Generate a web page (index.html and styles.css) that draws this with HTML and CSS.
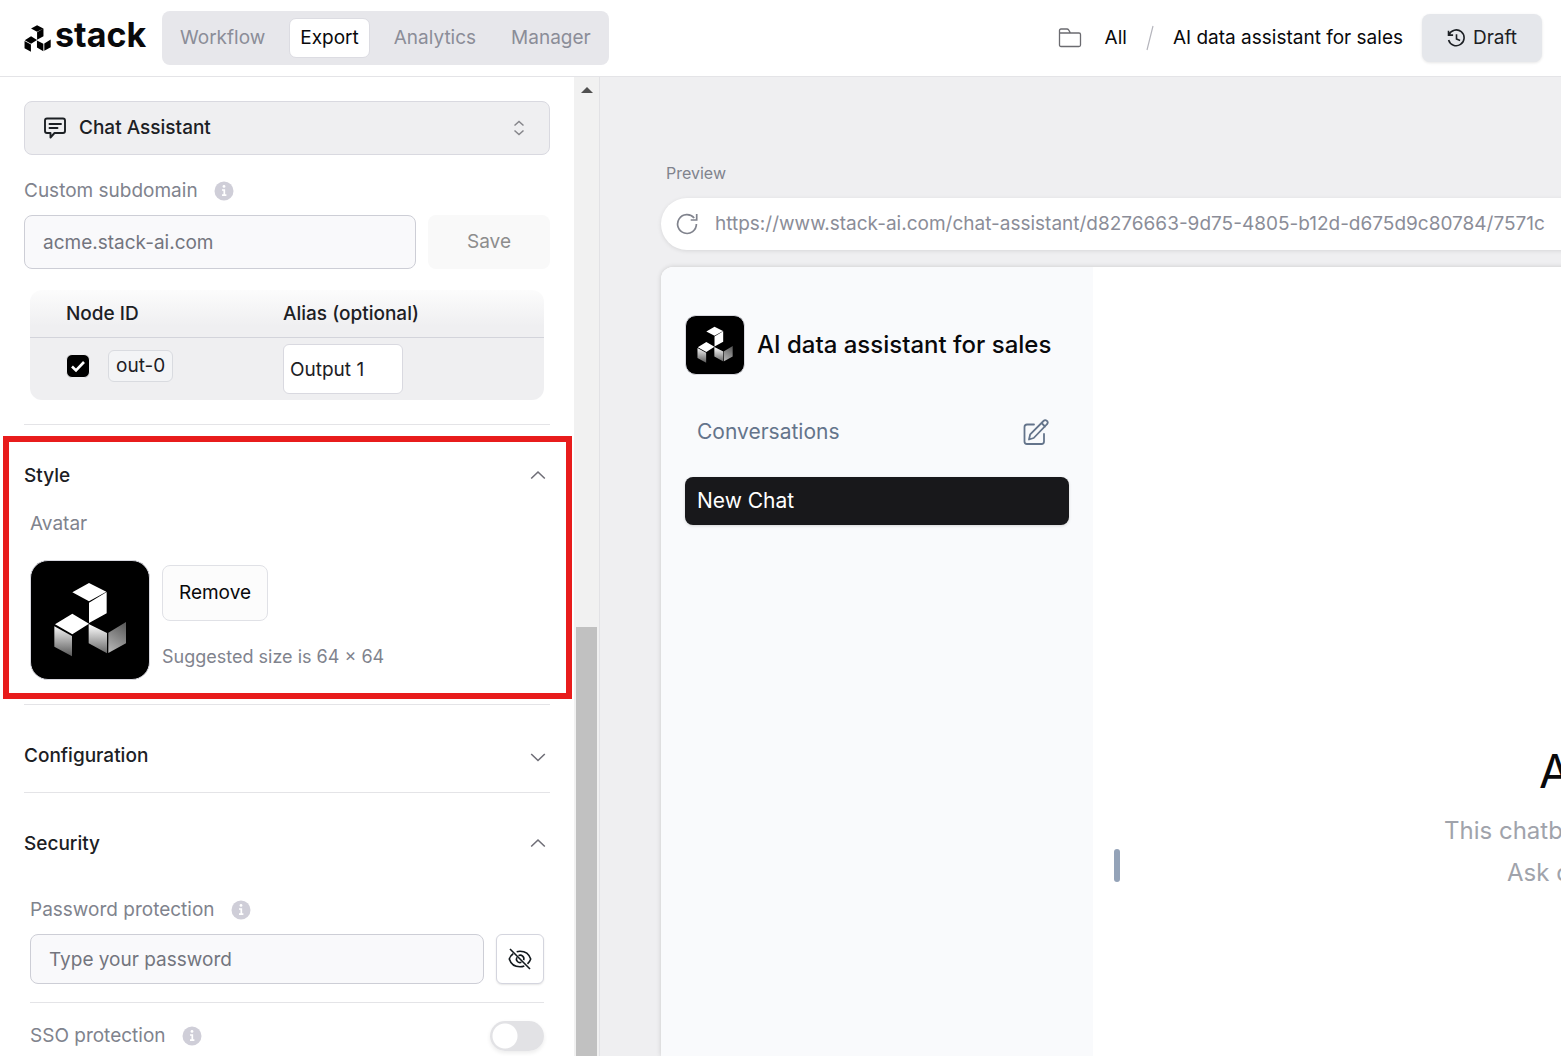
FILE: index.html
```html
<!DOCTYPE html>
<html lang="en">
<head>
<meta charset="utf-8">
<meta name="viewport" content="width=device-width, initial-scale=1">
<title>Stack – Export</title>
<link rel="stylesheet" href="styles.css">
</head>
<body>
<svg class="defs" aria-hidden="true">
  <defs>
    <linearGradient id="fade" gradientUnits="userSpaceOnUse" x1="0" y1="590" x2="0" y2="690">
      <stop offset="0" stop-color="#f4f4f4"/><stop offset="1" stop-color="#444"/>
    </linearGradient>
    <linearGradient id="fade-side" gradientUnits="userSpaceOnUse" x1="378" y1="585" x2="325" y2="660">
      <stop offset="0" stop-color="#5c5c5c"/><stop offset="1" stop-color="#b4b4b4"/>
    </linearGradient>
    <symbol id="cubes" viewBox="93 393 354 354">
      <path fill="#fff" d="M217 487l50-28 52 26-52 29zM267 518l53-32v64l-53 29zM165 583l52-32 50 30-50 32z"/>
      <path fill="url(#fade)" d="M163 589l53 29v61l-53-29zM266 582l55 27v61l-55-30z"/>
      <path fill="url(#fade-side)" d="M325 608l53-32v64l-53 29z"/>
    </symbol>
    <symbol id="info" viewBox="0 0 20 20">
      <circle cx="10" cy="10" r="9.5" fill="#cfced8"/>
      <circle cx="10" cy="5.4" r="1.4" fill="#fff"/>
      <path d="M8 9h2.3v5M8 14.2h4.4" fill="none" stroke="#fff" stroke-width="1.7"/>
    </symbol>
    <symbol id="chevron-up" viewBox="0 0 16 16">
      <path d="M1.2 10.5L8 4l6.8 6.5" fill="none" stroke="#6f6e77" stroke-width="1.6"/>
    </symbol>
    <symbol id="chevron-down" viewBox="0 0 16 16">
      <path d="M1.2 6L8 12.5 14.8 6" fill="none" stroke="#6f6e77" stroke-width="1.6"/>
    </symbol>
  </defs>
</svg>

<header class="topbar">
  <a class="brand" href="#">
    <svg class="brand-mark" viewBox="160 457 221 224" aria-hidden="true">
      <path d="M217 487l50-28 52 26-52 29zM267 518l53-32v64l-53 29zM165 583l52-32 50 30-50 32zM163 589l53 29v61l-53-29zM266 586l53 27v61l-53-30zM327 610l53-32v64l-53 29z"/>
    </svg>
    <span>stack</span>
  </a>
  <nav class="tabs">
    <a href="#">Workflow</a>
    <a href="#" class="active" aria-current="page">Export</a>
    <a href="#">Analytics</a>
    <a href="#">Manager</a>
  </nav>
  <div class="crumbs">
    <svg class="icon-folder" viewBox="0 0 24 24" aria-hidden="true"><path d="M1.500 19V4.500q0-1.500 1.500-1.500h6q1 0 1.600.9L12.500 7H21q1.500 0 1.500 1.500V19q0 1.500-1.500 1.500H3q-1.500 0-1.500-1.500zM1.500 7h11" fill="none" stroke="#6b6b70" stroke-width="1.300"/></svg>
    <a href="#">All</a>
    <svg class="slash" viewBox="0 0 8 26" aria-hidden="true"><path d="M7 1L1 25" stroke="#b4b4bc" stroke-width="1.200"/></svg>
    <span>AI data assistant for sales</span>
  </div>
  <button class="draft" type="button">
    <svg viewBox="0 0 20 20" aria-hidden="true"><path d="M2 6.200A8.300 8.300 0 1 1 1.700 11.500M1.600 1.800v4.700h4.800M10 5.500v5l3.800 1.600" fill="none" stroke="#1c2024" stroke-width="1.700"/></svg>
    Draft
  </button>
</header>

<div class="workspace">
  <aside class="settings">
    <div class="settings-body">
      <div class="select-box">
        <svg class="icon-chat" viewBox="0 0 24 24" aria-hidden="true"><path d="M4 2.500h16q2 0 2 2V15q0 2-2 2h-8.500L7.500 21.500V17H4q-2 0-2-2V4.500q0-2 2-2zM6.500 8h11.500M6.500 12h8" fill="none" stroke="#1c2024" stroke-width="1.900" stroke-linejoin="round" stroke-linecap="round"/></svg>
        <select aria-label="Interface"><option>Chat Assistant</option></select>
        <svg class="icon-sort" viewBox="0 0 12 16" aria-hidden="true"><path d="M1.500 5.500L6 1.500l4.500 4M1.500 10.500L6 14.500l4.500-4" fill="none" stroke="#85858a" stroke-width="1.500"/></svg>
      </div>

      <div class="label-row">
        <label for="subdomain">Custom subdomain</label>
        <svg class="info"><use href="#info"/></svg>
      </div>
      <div class="field-row">
        <input id="subdomain" class="field tall" type="text" placeholder="acme.stack-ai.com">
        <button class="save" type="button" disabled>Save</button>
      </div>

      <table class="nodes">
        <thead><tr><th scope="col">Node ID</th><th scope="col">Alias (optional)</th></tr></thead>
        <tbody><tr>
          <td><div class="node-cell"><input type="checkbox" checked aria-label="Include out-0"><span class="chip">out-0</span></div></td>
          <td><input class="alias" type="text" value="Output 1" aria-label="Alias for out-0"></td>
        </tr></tbody>
      </table>

      <section class="group highlighted">
        <h2><button type="button" aria-expanded="true">Style <svg class="chevron"><use href="#chevron-up"/></svg></button></h2>
        <div class="inset">
          <p class="avatar-label">Avatar</p>
          <div class="avatar-row">
            <svg class="avatar" role="img" aria-label="Avatar"><use href="#cubes"/></svg>
            <div class="avatar-side">
              <button class="remove" type="button">Remove</button>
              <p class="hint">Suggested size is 64 × 64</p>
            </div>
          </div>
        </div>
      </section>

      <section class="group">
        <h2><button type="button" aria-expanded="false">Configuration <svg class="chevron"><use href="#chevron-down"/></svg></button></h2>
      </section>

      <section class="group">
        <h2><button type="button" aria-expanded="true">Security <svg class="chevron"><use href="#chevron-up"/></svg></button></h2>
        <div class="inset security">
          <div class="label-row">
            <label for="password">Password protection</label>
            <svg class="info"><use href="#info"/></svg>
          </div>
          <div class="field-row">
            <input id="password" class="field" type="password" placeholder="Type your password">
            <button class="eye" type="button" aria-label="Show password">
              <svg viewBox="0 0 24 24" aria-hidden="true"><g fill="none" stroke="#11181c" stroke-width="1.600"><path d="M5.200 6.800C3.300 8 2 9.700 1.300 12c1.500 4.800 5.500 7.800 10.700 7.800 1.600 0 3-.3 4.300-.8M8.700 4.700c1-.3 2.100-.5 3.300-.5 5.200 0 9.200 3 10.700 7.800-.6 1.900-1.700 3.500-3.200 4.800M10.500 8.600a3.600 3.600 0 0 1 5.100 4.500M8.800 10.400a3.600 3.600 0 0 0 4.600 4.900M2 2l20 20"/></g></svg>
            </button>
          </div>
          <div class="switch-row">
            <div class="label-row">
              <label for="sso">SSO protection</label>
              <svg class="info"><use href="#info"/></svg>
            </div>
            <input id="sso" class="switch" type="checkbox" role="switch">
          </div>
        </div>
      </section>
    </div>
    <div class="scrollbar" aria-hidden="true"><i class="arrow"></i><i class="thumb"></i></div>
  </aside>

  <main class="preview">
    <p class="preview-label">Preview</p>
    <div class="address">
      <svg viewBox="0 0 22 22" aria-hidden="true"><path d="M20.400 11A9.400 9.400 0 1 1 18.200 5M20.700 1v6h-6" fill="none" stroke="#80838d" stroke-width="1.700"/></svg>
      <span>https://www.stack-ai.com/chat-assistant/d8276663-9d75-4805-b12d-d675d9c80784/7571c</span>
    </div>
    <div class="app">
      <aside class="app-side">
        <div class="app-title">
          <svg class="app-avatar" aria-hidden="true"><use href="#cubes"/></svg>
          <h1>AI data assistant for sales</h1>
        </div>
        <div class="convos">
          <span>Conversations</span>
          <button type="button" aria-label="New conversation">
            <svg viewBox="0 0 26 26" aria-hidden="true"><path d="M11 5.500H4q-2.500 0-2.500 2.500v14.500Q1.500 25 4 25h14.500q2.500 0 2.500-2.500V15M6 20.500l1.200-5.200L20.500 2q1.300-1.300 2.600-.600 2.300 1.100 1.400 3-.2.500-.7 1L10.700 19zM18.500 4l3.500 3.500" fill="none" stroke="#64748b" stroke-width="1.800" stroke-linejoin="round" stroke-linecap="round"/></svg>
          </button>
        </div>
        <a class="new-chat" href="#">New Chat</a>
      </aside>
      <div class="handle"></div>
      <section class="hero">
        <h2>AI data assistant for sales</h2>
        <p class="intro">This chatbot</p>
        <p class="ask">Ask questions</p>
      </section>
    </div>
  </main>
</div>
</body>
</html>
```

FILE: styles.css
```css
* { box-sizing: border-box; }
body {
  margin: 0;
  height: 100vh;
  display: flex;
  flex-direction: column;
  overflow: hidden;
  background: #fff;
  color: #1c2024;
  font: 400 19px/24px Inter, "Liberation Sans", sans-serif;
}
h1, h2, p { margin: 0; font-weight: 400; }
a { color: inherit; text-decoration: none; }
button, input, select { font: inherit; color: inherit; margin: 0; }
svg { display: block; flex: none; }
.defs { position: absolute; width: 0; height: 0; }

.topbar {
  flex: none;
  display: flex;
  align-items: center;
  height: 77px;
  padding: 0 19px 0 24px;
  border-bottom: 1px solid #e4e4e7;
  color: #09090b;
}
.brand { display: flex; align-items: center; gap: 4px; width: 138px; font-size: 34px; font-weight: 700; line-height: 40px; }
.brand-mark { width: 27px; height: 27px; }
.brand span { padding-bottom: 6px; }
.tabs { display: flex; gap: 13px; padding: 7px; background: #e7e7eb; border-radius: 8px; }
.tabs a { padding: 7px 10px; border: 1px solid transparent; border-radius: 7px; color: #8b8d98; }
.tabs .active { background: #fff; border-color: #dcdce2; color: #09090b; }
.crumbs { display: flex; align-items: center; gap: 19px; margin-left: auto; }
.icon-folder { width: 24px; height: 24px; margin-right: 4px; }
.slash { width: 8px; height: 26px; }
.draft {
  display: flex;
  align-items: center;
  justify-content: center;
  gap: 7px;
  width: 120px;
  height: 48px;
  margin-left: 19px;
  border: 0;
  border-radius: 8px;
  background: #e5e7eb;
  box-shadow: 0 1px 3px rgba(0, 0, 0, .1);
  color: #1c2024;
}
.draft svg { width: 19px; height: 19px; }

.workspace { flex: 1; min-height: 0; display: flex; }
.settings { flex: none; display: flex; width: 600px; border-right: 1px solid #e2e2e5; overflow: hidden; }
.settings-body { flex: 1; padding: 24px 24px 0; }
.scrollbar { display: flex; flex-direction: column; align-items: center; width: 25px; background: #f1f1f1; }
.arrow { margin-top: 10px; border: 6px solid transparent; border-top: 0; border-bottom-color: #505050; }
.thumb { flex: 1; width: 21px; margin-top: 534px; background: #c1c1c1; }

.select-box { position: relative; }
.select-box select {
  width: 100%;
  height: 54px;
  padding: 0 54px;
  border: 1px solid #d9d9e0;
  border-radius: 8px;
  background: #efeff1;
  appearance: none;
  font-weight: 500;
}
.icon-chat, .icon-sort { position: absolute; pointer-events: none; }
.icon-chat { left: 19px; top: 15px; width: 24px; height: 24px; }
.icon-sort { right: 25px; top: 19px; width: 12px; height: 16px; }

.label-row { display: flex; align-items: center; gap: 16px; color: #80838d; }
.info { width: 20px; height: 20px; }
.settings-body > .label-row { margin: 24px 0 12px; }
.field-row { display: flex; gap: 12px; }
.field {
  flex: 1;
  min-width: 0;
  height: 50px;
  padding: 0 18px;
  border: 1px solid #cdced6;
  border-radius: 8px;
  background: #f9f9fb;
}
.field.tall { height: 54px; }
.field::placeholder { color: #73757e; opacity: 1; }
.save { width: 122px; border: 0; border-radius: 8px; background: #f9f9f9; color: #8d8d8d; }

.nodes {
  width: calc(100% - 12px);
  margin: 21px 6px 24px;
  border-spacing: 0;
  table-layout: fixed;
  border-radius: 12px;
  background: linear-gradient(#fcfcfc, #efeff1 36px);
}
.nodes th, .nodes td { padding: 0 0 0 36px; }
.nodes th { height: 48px; border-bottom: 1px solid #d3d4db; text-align: left; font-weight: 500; }
.nodes td { height: 62px; }
.nodes th:first-child { width: 217px; }
.node-cell { display: flex; align-items: center; gap: 18px; padding-bottom: 6px; }
.node-cell input {
  width: 24px;
  height: 24px;
  appearance: none;
  border: 1px solid #efeff1;
  border-radius: 6px;
  background: #000 url("data:image/svg+xml,%3Csvg xmlns='http://www.w3.org/2000/svg' viewBox='0 0 22 22'%3E%3Cpath d='M5 11.500l4 4L17 7' fill='none' stroke='white' stroke-width='2.600'/%3E%3C/svg%3E") center / 22px;
}
.chip { padding: 3px 7px; border: 1px solid #d9dbe0; border-radius: 6px; background: #f3f4f6; }
.alias { display: block; width: 120px; height: 50px; padding: 0 6px; border: 1px solid #d9d9e0; border-radius: 6px; background: #fff; }

.group { position: relative; padding: 39px 0 24px; border-top: 1px solid #e4e4e7; }
/* Callout frame drawn around the section being explained */
.highlighted::after {
  content: "";
  position: absolute;
  inset: 11px -22px 5px -21px;
  border: 6px solid #e81c1c;
  pointer-events: none;
}
.group h2 { font-size: 19px; line-height: 24px; }
.group h2 button {
  display: flex;
  align-items: center;
  justify-content: space-between;
  width: 100%;
  padding: 0 4px 0 0;
  border: 0;
  background: none;
  font-weight: 500;
}
.chevron { width: 16px; height: 16px; }
.inset { padding: 0 6px; }
.avatar-label { margin: 24px 0; color: #80838d; }
.avatar-row { display: flex; gap: 12px; }
.avatar { width: 120px; height: 120px; border: 1px solid #d9d9e0; border-radius: 18px; background: #000; }
.avatar-side { padding-top: 5px; }
.remove { width: 106px; height: 56px; margin-bottom: 24px; border: 1px solid #e0e1e6; border-radius: 8px; background: #fcfcfc; color: #09090b; }
.hint { font-size: 18px; color: #80838d; }
.security > .label-row { margin: 42px 0 12px; }
.eye { display: grid; place-items: center; width: 48px; padding: 0; border: 1px solid #d4d5de; border-radius: 6px; background: #fff; box-shadow: 0 1px 2px rgba(0, 0, 0, .1); }
.eye svg { width: 24px; height: 24px; }
.switch-row { display: flex; align-items: center; justify-content: space-between; margin-top: 18px; padding-top: 18px; border-top: 1px solid #e4e4e7; }
.switch {
  width: 54px;
  height: 30px;
  appearance: none;
  border-radius: 15px;
  background: radial-gradient(circle at 15px 15px, #fff 12px, #e2e2e5 13px);
  box-shadow: 0 2px 4px rgba(0, 0, 0, .08);
}

.preview { flex: 1; min-width: 0; display: flex; flex-direction: column; padding: 84px 0 0 61px; background: #efeff1; overflow: hidden; }
.preview-label { padding-left: 5px; font-size: 16px; color: #80838d; }
.address {
  flex: none;
  display: flex;
  align-items: center;
  gap: 17px;
  height: 52px;
  margin: 13px -40px 17px 0;
  padding-left: 15px;
  border-radius: 26px;
  background: #fff;
  box-shadow: 0 1px 4px rgba(0, 0, 0, .1);
  color: #8b8d98;
  white-space: nowrap;
}
.address svg { width: 22px; height: 22px; }
.app { flex: 1; min-height: 0; display: flex; margin-right: -40px; border-radius: 12px 0 0 0; background: #fff; box-shadow: 0 0 5px rgba(0, 0, 0, .16); overflow: hidden; }
.app-side { flex: none; width: 432px; padding: 48px 24px; background: #f9fafc; }
.app-title { display: flex; align-items: center; gap: 12px; color: #09090b; }
.app-title h1 { font-size: 24px; line-height: 32px; font-weight: 500; white-space: nowrap; }
.app-avatar { width: 60px; height: 60px; border: 1px solid #d9d9e0; border-radius: 11px; background: #000; }
.convos { display: flex; align-items: center; justify-content: space-between; margin: 44px 20px 32px 12px; font-size: 21px; color: #64748b; }
.convos button { padding: 0; border: 0; background: none; }
.convos svg { width: 26px; height: 26px; }
.new-chat { display: block; padding: 12px; border-radius: 8px; background: #18181b; box-shadow: 0 1px 3px rgba(0, 0, 0, .15); color: #fff; font-size: 21px; }
.handle { flex: none; width: 6px; height: 33px; margin: 582px 0 0 21px; border-radius: 3px; background: #94a3b8; }
.hero { flex: 1; min-width: 0; padding-top: 480px; white-space: nowrap; color: #a0a3ab; font-size: 24px; line-height: 42px; }
.hero h2 { margin: 0 0 15px 419px; font-size: 46px; line-height: 48px; color: #09090b; }
.intro { margin-left: 324px; }
.ask { margin-left: 387px; }
```
